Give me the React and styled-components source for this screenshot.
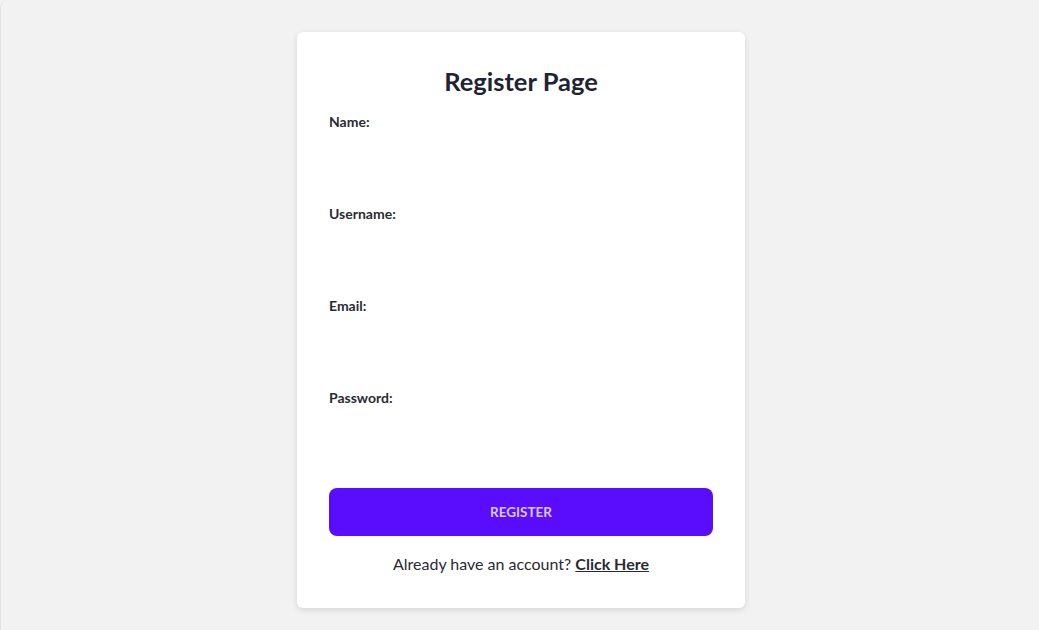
import styled, { createGlobalStyle } from 'styled-components';

const GlobalStyle = createGlobalStyle`
    html, body {
        margin: 0;
        padding: 0;
        background-color: #f2f2f2;
        font-family: Lato, "Noto Sans", sans-serif;
    }
`;

const fields = [
    { label: 'Name:', type: 'text' },
    { label: 'Username:', type: 'text' },
    { label: 'Email:', type: 'email' },
    { label: 'Password:', type: 'password' },
];

const App = () => {
    return (
        <Page>
            <GlobalStyle />
            <Card>
                <Title>Register Page</Title>
                <Form onSubmit={(e) => e.preventDefault()}>
                    {fields.map((f) => (
                        <Field key={f.label}>
                            <Label>{f.label}</Label>
                            <Input type={f.type} />
                        </Field>
                    ))}
                    <SubmitButton type="submit">REGISTER</SubmitButton>
                </Form>
                <Footer>
                    Already have an account? <FooterLink href="#">Click Here</FooterLink>
                </Footer>
            </Card>
        </Page>
    );
};

export default App;

const Page = styled.div`
    display: flex;
    justify-content: center;
    align-items: flex-start;
    box-sizing: border-box;
    min-height: 630px;
    padding: 32px 0 0 2px;
    background-color: #f2f2f2;
    border-left: 1px solid #e2e2e2;
    border-top-left-radius: 8px;
`;

const Card = styled.div`
    display: flex;
    flex-direction: column;
    box-sizing: border-box;
    width: 448px;
    padding: 31px 32px 32px;
    background-color: #ffffff;
    border-radius: 6px;
    box-shadow: 0 2px 6px rgba(0, 0, 0, 0.12);
`;

const Title = styled.h2`
    margin: 0 0 13px;
    text-align: center;
    font-size: 25.5px;
    font-weight: 700;
    line-height: 36px;
    color: #1e2433;
`;

const Form = styled.form`
    display: flex;
    flex-direction: column;
`;

const Field = styled.div`
    display: flex;
    flex-direction: column;
    height: 92px;
`;

const Label = styled.label`
    font-size: 14px;
    font-weight: 700;
    line-height: 20px;
    color: #2b2b36;
`;

const Input = styled.input`
    margin-top: 8px;
    height: 36px;
    border: none;
    outline: none;
    background: transparent;
    font-size: 14px;
`;

const SubmitButton = styled.button`
    height: 48px;
    margin-top: 8px;
    border: none;
    border-radius: 8px;
    background-color: #5a0cfc;
    color: #d9c9ff;
    font-family: Lato, "Noto Sans", sans-serif;
    font-size: 13.5px;
    font-weight: 700;
    cursor: pointer;
`;

const Footer = styled.p`
    margin: 16px 0 0;
    text-align: center;
    font-size: 16px;
    line-height: 24px;
    color: #2a2a33;
`;

const FooterLink = styled.a`
    font-weight: 700;
    color: #2a2a33;
    text-decoration: underline;
`;
